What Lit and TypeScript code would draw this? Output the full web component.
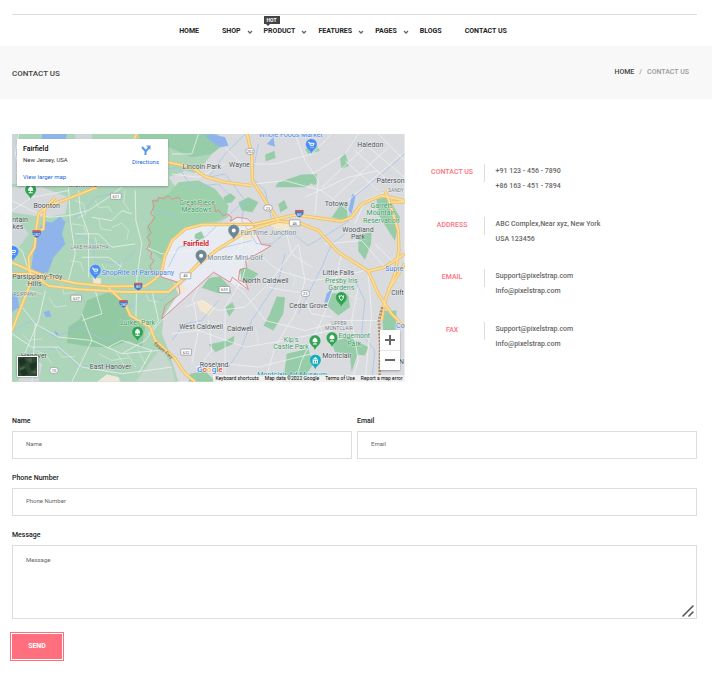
import { LitElement, html, svg, css } from "lit";
import { customElement } from "lit/decorators.js";

interface NavItem { label: string; menu?: boolean; hot?: boolean; }

const NAV: NavItem[] = [
  { label: "Home" },
  { label: "Shop", menu: true },
  { label: "Product", menu: true, hot: true },
  { label: "Features", menu: true },
  { label: "Pages", menu: true },
  { label: "Blogs" },
  { label: "Contact us" },
];

const CONTACTS = [
  { title: "Contact us", lines: ["+91 123 - 456 - 7890", "+86 163 - 451 - 7894"] },
  { title: "Address", lines: ["ABC Complex,Near xyz, New York", "USA 123456"] },
  { title: "Email", lines: ["Support@pixelstrap.com", "Info@pixelstrap.com"] },
  { title: "Fax", lines: ["Support@pixelstrap.com", "Info@pixelstrap.com"] },
];

/* Map geometry: three units to one layout pixel, 1179 x 744 in all. */
const PARKS = [
  "M400 60L470 40L540 70L600 60L625 40L600 0H380Z",
  "M800 145L870 122L915 120L915 140L880 160L790 160Z",
  "M760 62L788 50L792 72L762 82Z",
  "M985 75L1000 55L1012 95L990 104Z",
  "M680 205L710 190L740 205L722 235L690 230Z",
  "M635 190L655 178L672 190L660 206L640 208Z",
  "M800 210L818 198L828 222L806 236Z",
  "M960 250L985 215L1005 218L1010 262Z",
  "M1040 302L1080 296L1078 330L1060 378L1040 352Z",
  "M1095 195L1130 190L1165 250L1150 320L1130 290L1100 240Z",
  "M550 300L568 292L578 310L560 320L548 312Z",
  "M592 432L625 428L650 455L660 480L620 478L570 462Z",
  "M684 405L705 402L740 420L712 448L690 440Z",
  "M772 545L795 488L820 490L815 540L785 590L755 575Z",
  "M640 520L662 505L670 525L652 548Z",
  "M590 632L640 622L668 606L665 630L612 655Z",
  "M620 330L632 318L645 326L636 340Z",
  "M945 515L960 478L1010 480L1015 520L980 545Z",
  "M825 660L890 645L905 690L870 744H815Z",
  "M1110 532L1155 530L1152 590L1115 590Z",
  "M890 130L912 122L915 150L905 154Z",
  "M535 720L580 712L612 744H530Z",
  "M1015 670L1030 640L1040 655L1020 715Z",
  "M880 45L915 34L925 50L890 60Z",
  "M960 625L1010 610L1070 640L1060 665L970 655Z",
];

const WATER = [
  "M95 262L120 266L145 248L160 264L150 300L160 330L125 370L108 415L80 420L58 402L68 330L80 290Z",
  "M580 5L600 0L640 10L650 35L625 40L605 28Z",
  "M765 30L785 10L790 38Z",
  "M945 480L965 460L950 505L938 506Z",
  "M0 478L15 480L22 520L0 534Z",
  "M85 58L90 0H165L162 14L110 20Z",
  "M128 590L140 600L132 608Z",
  "M95 535L112 530L118 548L102 550Z",
  "M1010 230L1022 180L1032 185L1020 240Z",
];

const CREEKS = [
  "M700 0L640 60L590 130L640 120L700 200L690 260L735 330L780 330L830 290L890 335L950 300L1010 262L1025 190L1100 130L1179 60",
  "M0 590L60 560L130 610L200 580L280 620L330 600",
  "M160 264L210 240L250 190L300 180",
  "M300 470L360 520L400 480L450 500L520 440L560 380L640 340L720 320",
  "M470 400L500 340L560 330L620 270L700 200",
  "M820 360L800 440L760 500L720 560L690 640L650 700",
  "M860 540L900 460L930 400L960 330L1000 300",
  "M20 680L80 640L150 650L200 700L290 690L340 740",
  "M400 60L440 110L500 100L540 160L620 150L650 180",
  "M740 30L720 130L760 170L780 260",
  "M480 620L520 570L570 560L620 500",
  "M1030 440L1060 500L1050 600L1090 650L1080 744",
  "M430 230L480 240L520 290L470 320",
  "M180 300L240 320L250 380L330 390L370 350",
];

const STREETS = [
  "M0 200L60 230L110 250L170 245L230 230L290 190L330 160",
  "M170 160L175 260L190 360L170 440", "M200 170L205 230L230 300L230 430",
  "M370 170L372 260L390 330L375 430L372 560", "M240 250L300 260L330 230L360 240",
  "M190 300L260 300L300 340L370 330", "M210 370L290 370L330 400",
  "M0 330L30 350L60 440L30 520L70 570L140 610L240 620L330 660L440 650",
  "M0 600L60 640L140 640L210 700L330 720L480 700",
  "M70 570L60 744", "M210 540L240 620L180 744", "M330 660L400 620L440 570L470 540",
  "M290 640L330 620L420 650L380 720", "M100 470L80 560L30 680",
  "M250 470L270 540L210 560", "M420 470L440 560L410 600", "M0 230L60 190L170 170",
  "M404 340L450 360L540 350L620 280L680 290", "M520 520L570 500L620 530L700 520L770 450L860 330",
  "M545 500L560 590L540 690", "M700 330L740 360L800 410L900 440L980 430L1060 410",
  "M640 430L700 480L760 560L880 590L1000 560L1100 560", "M860 330L880 440L850 540L790 640L760 744",
  "M990 360L970 450L930 560L870 680L850 744", "M710 370L690 440L640 520L640 744",
  "M480 600L560 590L700 640L820 620L960 590", "M550 700L640 690L740 700L900 660",
  "M730 150L820 140L930 170L1010 230", "M640 40L690 90L790 90L900 60L960 0",
  "M850 0L880 80L920 140L910 240", "M1000 80L1100 170", "M1030 50L1140 150",
  "M1060 30L1179 130", "M1100 0L1179 80", "M930 160L1080 20", "M970 190L1130 40",
  "M1010 200L1170 60", "M900 120L1000 60L1040 0", "M880 190L1010 130L1100 110",
  "M880 500L900 540L960 550", "M1040 460L1020 560L1040 680L1020 744",
  "M1070 420L1080 540L1060 744", "M770 460L820 470L900 480", "M590 560L600 650L560 700",
  "M20 0L10 60L40 160", "M480 120L560 130L640 90", "M560 0L540 60L480 60",
  "M820 280L840 360L900 400", "M940 330L1050 320L1120 400", "M1030 270L1060 200L1130 170",
  "M1090 330L1140 380L1179 360", "M680 260L690 330L650 400", "M500 420L560 460L540 500",
];

/* Narrow residential lanes of the western suburbs. */
const LANES = [
  "M190 200L215 210L222 240L198 252", "M250 200L262 222L290 218L300 235", "M300 280L330 268L350 290L345 318",
  "M250 310L255 335L285 345", "M175 380L205 385L215 412", "M270 390L280 410L320 412L330 385",
  "M340 170L335 205L352 230", "M180 270L215 275L222 298", "M260 255L268 285L300 290",
  "M40 450L52 470L90 480", "M110 490L130 520L165 515", "M130 640L150 670L190 668", "M70 650L100 662L120 690",
  "M260 660L300 680L350 672", "M310 650L340 700", "M345 660L372 700", "M380 650L400 690",
  "M400 470L410 500L440 505", "M30 600L50 620L90 615", "M150 450L155 480L185 476",
  "M600 560L640 575L660 600", "M700 580L735 590L740 630", "M900 560L930 585L925 620",
  "M1000 480L1050 500", "M1080 450L1095 480", "M830 410L850 430L845 460",
];

const HIGHWAYS = [
  "M0 386L50 408L110 430L190 448L290 458L400 456L430 436L450 410L458 370L480 320L520 285L570 272L730 271L850 243L990 262L1020 250L1050 210L1110 185L1179 200",
  "M0 420L60 420L110 456L200 466L330 474L470 474L510 440L560 390L620 345L700 295L740 280L800 262L860 266L920 290L980 355L1070 412L1100 480L1140 540L1179 580",
  "M255 160L180 190L110 215L80 238L72 290L68 340L50 370L52 410L62 430L0 590",
  "M130 190L98 225L94 286L78 290",
  "M290 462L340 510L355 545L415 580L430 620L490 675L520 720L550 744",
  "M374 0L350 50", "M468 85L540 100L580 128L640 145L720 155",
  "M706 0L720 60L722 140L760 200L800 260",
  "M1120 170L1132 200L1160 290L1162 350L1150 420L1120 500L1110 560",
  "M1070 412L1120 400L1179 360", "M1130 470L1179 390", "M1140 205L1179 204",
];

const BORDER = "M450 555L605 415L655 445L662 430L710 468L703 448L680 438L684 408L705 402L702 380L778 336L750 332L733 300L724 270L706 254L676 250L656 262L660 250L645 240L635 246L620 228L612 234L606 206L585 214L545 210L535 218L515 205L500 190L480 196L470 186L455 195L440 190L438 202L422 200L426 218L416 240L428 250L420 264L408 278L418 296L406 310L416 328L404 345L420 356L416 372L426 380L414 398L420 412L450 430L498 445L505 480L460 515Z";

interface MapLabel { x: number; y: number; text: string; kind: string; }

const LABELS: MapLabel[] = [
  { x: 570, y: 104, text: "Lincoln Park", kind: "town" },
  { x: 683, y: 98, text: "Wayne", kind: "town" },
  { x: 1076, y: 38, text: "Haledon", kind: "town" },
  { x: 1137, y: 147, text: "Paterson", kind: "town" },
  { x: 974, y: 215, text: "Totowa", kind: "town" },
  { x: 1039, y: 293, text: "Woodland", kind: "town" },
  { x: 1039, y: 314, text: "Park", kind: "town" },
  { x: 104, y: 221, text: "Boonton", kind: "town" },
  { x: 24, y: 264, text: "ntain", kind: "town" },
  { x: 18, y: 285, text: "kes", kind: "town" },
  { x: 76, y: 435, text: "Parsippany-Troy", kind: "town" },
  { x: 68, y: 457, text: "Hills", kind: "town" },
  { x: 980, y: 423, text: "Little Falls", kind: "town" },
  { x: 762, y: 447, text: "North Caldwell", kind: "town" },
  { x: 890, y: 524, text: "Cedar Grove", kind: "town" },
  { x: 568, y: 585, text: "West Caldwell", kind: "town" },
  { x: 685, y: 592, text: "Caldwell", kind: "town" },
  { x: 976, y: 672, text: "Montclair", kind: "town" },
  { x: 296, y: 706, text: "East Hanover", kind: "town" },
  { x: 66, y: 674, text: "Hanover", kind: "town" },
  { x: 607, y: 701, text: "Roseland", kind: "town" },
  { x: 1158, y: 484, text: "Clift", kind: "town" },
  { x: 1170, y: 692, text: "N", kind: "town" },
  { x: 213, y: 160, text: "Montville", kind: "town" },
  { x: 553, y: 337, text: "Fairfield", kind: "city" },
  { x: 556, y: 213, text: "Great Piece", kind: "park" },
  { x: 554, y: 235, text: "Meadows", kind: "park" },
  { x: 1109, y: 222, text: "Garrett", kind: "park" },
  { x: 1109, y: 244, text: "Mountain", kind: "park" },
  { x: 1109, y: 266, text: "Reservation", kind: "park" },
  { x: 989, y: 448, text: "Presby Iris", kind: "park" },
  { x: 989, y: 470, text: "Gardens", kind: "park" },
  { x: 377, y: 574, text: "Lurker Park", kind: "park" },
  { x: 838, y: 625, text: "Kip's", kind: "park" },
  { x: 838, y: 647, text: "Castle Park", kind: "park" },
  { x: 1028, y: 614, text: "Edgemont", kind: "park" },
  { x: 1028, y: 636, text: "Park", kind: "park" },
  { x: 378, y: 425, text: "ShopRite of Parsippany", kind: "shop" },
  { x: 837, y: 10, text: "Whole Foods Market", kind: "shop" },
  { x: 1148, y: 413, text: "Supre", kind: "shop" },
  { x: 1166, y: 584, text: "Co", kind: "shop" },
  { x: 770, y: 304, text: "FunTime Junction", kind: "place" },
  { x: 670, y: 379, text: "Monster Mini Golf", kind: "place" },
  { x: 841, y: 730, text: "Montclair Art Museum", kind: "museum" },
  { x: 233, y: 345, text: "LAKE HIAWATHA", kind: "area" },
  { x: 982, y: 575, text: "UPPER", kind: "area" },
  { x: 982, y: 590, text: "MONTCLAIR", kind: "area" },
  { x: 39, y: 488, text: "RSIPPANY", kind: "area" },
  { x: 1153, y: 175, text: "SANDY", kind: "area" },
];

const PINS = [
  { x: 666, y: 318, color: "#6f8794", icon: "dot" },
  { x: 568, y: 394, color: "#6f8794", icon: "dot" },
  { x: 899, y: 60, color: "#4b8df8", icon: "cart" },
  { x: 250, y: 438, color: "#4b8df8", icon: "cart" },
  { x: 3, y: 382, color: "#4b8df8", icon: "cart" },
  { x: 56, y: 196, color: "#31a453", icon: "tree" },
  { x: 377, y: 624, color: "#31a453", icon: "tree" },
  { x: 910, y: 650, color: "#31a453", icon: "tree" },
  { x: 961, y: 641, color: "#31a453", icon: "tree" },
  { x: 989, y: 520, color: "#31a453", icon: "flower" },
  { x: 911, y: 708, color: "#12aec0", icon: "museum" },
];

const SHIELDS = [
  { x: 312, y: 187, text: "621" }, { x: 193, y: 493, text: "637" },
  { x: 521, y: 426, text: "46" }, { x: 849, y: 267, text: "46" },
  { x: 638, y: 467, text: "633" }, { x: 523, y: 655, text: "632" },
  { x: 715, y: 52, text: "202", round: true }, { x: 769, y: 222, text: "23", round: true },
  { x: 881, y: 479, text: "23", round: true }, { x: 126, y: 710, text: "10", round: true },
];

const INTERSTATES = [
  { x: 379, y: 458, text: "80" }, { x: 335, y: 510, text: "280" },
  { x: 863, y: 239, text: "80" }, { x: 74, y: 300, text: "287" },
];

const GLYPHS: Record<string, unknown> = {
  dot: svg`<circle cy="-28" r="6" fill="#fff"/>`,
  cart: svg`<path d="M-9 -35H-6L-3 -26H6L8 -32H-4M-1 -20h.1M5 -20h.1" fill="none" stroke="#fff" stroke-width="3" stroke-linecap="round" stroke-linejoin="round"/>`,
  tree: svg`<path d="M0 -39C7 -36 8 -30 7 -25H1V-21H6V-18H-6V-21H-1V-25H-7C-8 -30 -7 -36 0 -39Z" fill="#fff"/>`,
  flower: svg`<path d="M-7 -34L-3 -32L0 -36L3 -32L7 -34L5 -26L0 -20L-5 -26Z" fill="none" stroke="#fff" stroke-width="3"/>`,
  museum: svg`<path d="M-9 -31L0 -38L9 -31ZM-8 -29H8V-19H-8ZM-4 -27V-21H-1V-27ZM2 -27V-21H5V-27Z" fill="#fff" fill-rule="evenodd"/>`,
};

@customElement("area-map")
class AreaMap extends LitElement {
  static styles = css`
    :host { display: block; position: relative; font-family: Roboto, sans-serif; overflow: hidden; }
    .canvas { display: block; width: 100%; height: auto; }
    .canvas text { text-anchor: middle; font-size: 21px; paint-order: stroke; stroke: #fff; stroke-opacity: 0.6; stroke-width: 3px; stroke-linejoin: round; }
    .canvas .town { fill: #4a4d51; }
    .canvas .city { fill: #d2232a; font-weight: 700; }
    .canvas .park { fill: #3b9c62; }
    .canvas .shop { fill: #3c80ea; }
    .canvas .place { fill: #718895; }
    .canvas .museum { fill: #12929f; }
    .canvas .area { fill: #74797e; font-size: 15px; }
    .canvas .road { fill: #7d6137; stroke: none; font-size: 15px; }
    .canvas .num { font-size: 12px; fill: #555; stroke: none; }
    .canvas .inum { font-size: 12px; fill: #fff; stroke: none; }
    .canvas .logo { font-size: 24px; font-weight: 500; stroke-opacity: 1; text-anchor: start; }
    .card { position: absolute; left: 5px; top: 5px; width: 151px; height: 47px; box-sizing: border-box; padding: 5px 6px; background: #fff; box-shadow: 0 1px 2px rgb(0 0 0 / 25%); display: flex; justify-content: space-between; font-size: 6px; line-height: 8px; color: #333; }
    .info { display: flex; flex-direction: column; }
    .info strong { font-size: 7px; line-height: 10px; font-weight: 500; color: #000; }
    .info span { line-height: 12px; }
    .info a { margin-top: auto; }
    .card a { color: #1a67e0; text-decoration: none; }
    .directions { display: flex; flex-direction: column; align-items: center; align-self: flex-start; padding: 1px 3px 0 0; gap: 3px; }
    .directions svg { width: 10px; height: 10px; }
    .zoom { position: absolute; right: 5px; bottom: 12px; width: 20px; display: flex; flex-direction: column; background: #fff; box-shadow: 0 1px 2px rgb(0 0 0 / 30%); }
    .zoom button { height: 20px; padding: 0; border: 0; background: none; display: grid; place-items: center; }
    .zoom button + button { border-top: 1px solid #e6e6e6; }
    .zoom svg { width: 10px; height: 10px; }
    .layer { position: absolute; left: 5px; bottom: 5px; width: 21px; height: 21px; padding: 0; border: 1px solid #fff; background: #2e4732; box-shadow: 0 0 2px rgb(0 0 0 / 40%); }
    .layer svg { display: block; width: 100%; height: 100%; }
    .legal { position: absolute; right: 0; bottom: 0; display: flex; gap: 6px; padding: 0 2px; background: rgb(245 245 245 / 85%); font-size: 5px; line-height: 7px; white-space: nowrap; color: #000; }
    .legal a, .legal button { font: inherit; color: inherit; text-decoration: none; padding: 0; border: 0; background: none; }
  `;

  render() {
    return html`
      <svg class="canvas" viewBox="0 0 1179 744" role="img" aria-label="Map of Fairfield, New Jersey">
        <rect width="1179" height="744" fill="#d9dbdf"/>
        <path d="M0 0H620L600 60L560 110L500 140L470 190L620 200L650 250L500 320L440 420L498 445L500 480L455 555L450 600L470 650L500 744H0Z" fill="#add5b9"/>
        <path d="M0 160H90L170 190L160 240L100 250L60 245L0 235Z" fill="#d5d9dc"/>
        <path d="M0 0H16V150H0ZM0 250L30 270L50 300L20 340L0 330ZM190 0H240V16H190Z" fill="#cfd6d9"/>
        <path d="M470 130L520 110L560 120L590 180L500 170Z" fill="#d9dbdf"/>
        <path d="M30 660L90 690L80 744H20Z" fill="#d5d9dc"/>
        <path d="M255 744L285 722L320 730L325 744Z" fill="#efe9dc"/>
        <path d="M370 744L450 640L480 700L490 744Z" fill="#c6d8cd"/>
        <path d="M420 200L470 180L500 145L560 140L610 165L650 215L645 245L620 260L570 268L510 285L470 330L450 380L410 340L405 280L425 250Z" fill="#9cd1ac"/>
        <path d="M225 500L290 475L330 500L350 540L400 580L390 640L350 620L300 640L240 640L165 628L170 580L205 555Z" fill="#92c8a2"/>
        ${PARKS.map((d) => svg`<path d=${d} fill="#97cca8"/>`)}
        <path d="M450 555L500 480L498 445L450 430L460 370L480 320L520 285L570 270L650 268L676 250H706L724 270L733 300L750 332L778 336L702 380L684 438L703 448L710 468L655 445L605 415Z" fill="#e9ebf2"/>
        <path d="M550 300L568 292L578 310L560 320L548 312ZM684 405L705 402L714 440L690 440Z" fill="#97cca8"/>
        <path d="M485 450L510 445L525 470L500 480ZM555 505L575 500L610 525L590 545L565 530ZM690 290L730 280L730 310L695 320ZM242 432L268 434L266 452L245 452ZM770 265L830 258L835 290L790 285Z" fill="#f3e8cd"/>
        ${CREEKS.map((d) => svg`<path d=${d} fill="none" stroke="#9dbff0" stroke-width="2.5" stroke-linejoin="round" opacity=".8"/>`)}
        ${WATER.map((d) => svg`<path d=${d} fill="#8fb4ec"/>`)}
        ${LANES.map((d) => svg`<path d=${d} fill="none" stroke="#e6efe9" stroke-width="2" stroke-linejoin="round" opacity=".8"/>`)}
        ${STREETS.map((d) => svg`<path d=${d} fill="none" stroke="#f0f3f4" stroke-width="3" stroke-linejoin="round" opacity=".75"/>`)}
        <path d=${BORDER} fill="none" stroke="#df8d8d" stroke-width="3" stroke-linejoin="round"/>
        ${HIGHWAYS.map((d) => svg`<path d=${d} fill="none" stroke="#efbf67" stroke-width="10" stroke-linejoin="round"/>`)}
        ${HIGHWAYS.map((d) => svg`<path d=${d} fill="none" stroke="#fbdf96" stroke-width="5" stroke-linejoin="round"/>`)}
        <path d="M1112 520L1102 560L1106 640L1104 725" fill="none" stroke="#b58d62" stroke-width="8" stroke-dasharray="6 4"/>
        <path id="parkway" d="M424 630L480 678" fill="none"/>
        <text class="road"><textPath href="#parkway" startOffset="50%">Essex Fwy</textPath></text>
        ${SHIELDS.map((s) => svg`
          <rect x=${s.x - (s.round ? 13 : 16)} y=${s.y - 9} width=${s.round ? 26 : 32} height="18" rx=${s.round ? 9 : 2} fill="#fff" stroke="#8a8d90" stroke-width="2"/>
          <text class="num" x=${s.x} y=${s.y + 5}>${s.text}</text>`)}
        ${INTERSTATES.map((s) => svg`
          <path d="M${s.x - 12} ${s.y - 10}H${s.x + 12}Q${s.x + 16} ${s.y + 5} ${s.x} ${s.y + 12}Q${s.x - 16} ${s.y + 5} ${s.x - 12} ${s.y - 10}Z" fill="#4477c4"/>
          <path d="M${s.x - 12} ${s.y - 11}H${s.x + 12}V${s.y - 6}H${s.x - 12}Z" fill="#d45b56"/>
          <text class="inum" x=${s.x} y=${s.y + 6}>${s.text}</text>`)}
        ${LABELS.map((l) => svg`<text class=${l.kind} x=${l.x} y=${l.y}>${l.text}</text>`)}
        ${PINS.map((p) => svg`
          <g transform="translate(${p.x} ${p.y})">
            <path d="M0 0C-3 -12 -17 -16 -17 -29A17 17 0 0 1 17 -29C17 -16 3 -12 0 0Z" fill=${p.color} stroke="#fff" stroke-opacity=".5"/>
            ${GLYPHS[p.icon]}
          </g>`)}
        <text class="logo" x="556" y="714"><tspan fill="#4285f4">G</tspan><tspan fill="#ea4335">o</tspan><tspan fill="#fbbc05">o</tspan><tspan fill="#4285f4">g</tspan><tspan fill="#34a853">l</tspan><tspan fill="#ea4335">e</tspan></text>
      </svg>
      <div class="card">
        <div class="info">
          <strong>Fairfield</strong>
          <span>New Jersey, USA</span>
          <a href="#larger">View larger map</a>
        </div>
        <a class="directions" href="#directions">
          <svg viewBox="0 0 20 20" aria-hidden="true"><path d="M9 20V12L2 4M9 13L16 5" fill="none" stroke="#5a9be8" stroke-width="4"/><path d="M10 1H19V10Z" fill="#5a9be8"/></svg>
          Directions
        </a>
      </div>
      <button class="layer" aria-label="Show satellite imagery">
        <svg viewBox="0 0 20 20" aria-hidden="true"><path d="M0 3L6 1L9 6L3 10ZM12 8L19 5V11L14 14ZM2 15L8 12L11 18L5 20Z" fill="#1d3323"/><path d="M8 2L15 1L14 6ZM1 12L6 10L8 11L3 14ZM13 16L19 14V18Z" fill="#4b6049"/></svg>
      </button>
      <div class="zoom">
        <button aria-label="Zoom in"><svg viewBox="0 0 10 10" aria-hidden="true"><path d="M5 0V10M0 5H10" stroke="#666" stroke-width="2"/></svg></button>
        <button aria-label="Zoom out"><svg viewBox="0 0 10 10" aria-hidden="true"><path d="M0 5H10" stroke="#666" stroke-width="2"/></svg></button>
      </div>
      <div class="legal">
        <button>Keyboard shortcuts</button><span>Map data ©2022 Google</span><a href="#terms">Terms of Use</a><a href="#report">Report a map error</a>
      </div>
    `;
  }
}

@customElement("app-root")
class AppRoot extends LitElement {
  static styles = css`
    :host { display: block; background: #fff; font-family: Roboto, sans-serif; font-size: 7px; line-height: 15px; color: #222; padding-top: 14px; }
    a { color: inherit; text-decoration: none; }
    .header { margin: 0 15px 0 12px; border-top: 1px solid #ddd; }
    .nav { box-sizing: border-box; display: flex; justify-content: center; height: 31px; align-items: center; padding: 2px 23px 0 0; }
    .nav ul { display: flex; list-style: none; margin: 0; padding: 0; }
    .item { position: relative; display: flex; align-items: center; gap: 6px; padding-right: 23px; font-weight: 700; text-transform: uppercase; }
    .item:last-child { padding-right: 0; }
    .item.menu { padding-right: 11px; }
    .chevron { width: 6px; height: 6px; }
    .hot { position: absolute; left: 0; top: -8px; width: 16px; height: 8px; background: #444; color: #fff; font-size: 5px; line-height: 8px; text-align: center; }
    .hot::after { content: ""; position: absolute; left: 2px; top: 8px; border: 2px solid transparent; border-top-color: #444; }
    .banner { box-sizing: border-box; background: #f8f8f8; height: 53px; padding: 2px 23px 0 12px; display: flex; justify-content: space-between; align-items: center; text-transform: uppercase; }
    .banner h1 { margin: 0; font-size: 8px; font-weight: 500; color: #444; }
    .crumbs { display: flex; gap: 5px; margin: 0; padding: 0 0 3px; list-style: none; font-weight: 500; color: #999; }
    .crumbs a { color: #444; }
    .content { padding: 35px 15px 30px 12px; }
    .top { display: grid; grid-template-columns: 7fr 5fr; column-gap: 12px; }
    .contacts { margin: 0; padding: 30px 0; display: flex; flex-direction: column; justify-content: space-between; }
    .contact { display: flex; align-items: flex-start; height: 30px; }
    .contact h2 { box-sizing: border-box; width: 68px; height: 18px; margin: 0; padding-left: 4px; border-right: 1px solid #ddd; font-size: 7px; line-height: 16px; font-weight: 500; text-align: center; text-transform: uppercase; color: #ff6f7d; }
    .contact p { margin: 0; padding-left: 11px; font-weight: 500; color: #666; }
    .contact span { display: block; }
    form { display: grid; grid-template-columns: 1fr 1fr; gap: 14px 5px; margin-top: 34px; }
    .field { display: flex; flex-direction: column; }
    .wide { grid-column: 1 / -1; }
    label { font-weight: 500; line-height: 10px; padding-bottom: 5px; }
    input, textarea { display: block; box-sizing: border-box; width: 100%; height: 28px; margin: 0; padding: 0 13px 2px; border: 1px solid #ddd; border-radius: 0; background: #fff; color: #333; font: 6px/10px Roboto, sans-serif; }
    textarea { height: 74px; padding-top: 9px; resize: none; }
    ::placeholder { color: #666; opacity: 1; }
    .box { position: relative; }
    .grip { position: absolute; right: 3px; bottom: 2px; width: 12px; height: 12px; }
    .send { justify-self: start; width: 50px; height: 25px; margin-top: 1px; padding: 0; border: 0; background: #ff6f7d; outline: 1px solid #ff6f7d; outline-offset: 1px; color: #fff; font: 700 7px/10px Roboto, sans-serif; text-transform: uppercase; }
  `;

  render() {
    return html`
      <header class="header">
        <nav class="nav">
          <ul>
            ${NAV.map((n) => html`
              <li class="item ${n.menu ? "menu" : ""}">
                <a href="#">${n.label}</a>
                ${n.menu ? html`<svg class="chevron" viewBox="0 0 6 6" aria-hidden="true"><path d="M1 2L3 4L5 2" fill="none" stroke="#666" stroke-width="1.3"/></svg>` : ""}
                ${n.hot ? html`<span class="hot">Hot</span>` : ""}
              </li>`)}
          </ul>
        </nav>
      </header>
      <section class="banner">
        <h1>Contact us</h1>
        <ol class="crumbs"><li><a href="#">Home</a></li><li>/</li><li>Contact us</li></ol>
      </section>
      <main class="content">
        <div class="top">
          <area-map></area-map>
          <div class="contacts">
            ${CONTACTS.map((c) => html`
              <div class="contact">
                <h2>${c.title}</h2>
                <p>${c.lines.map((l) => html`<span>${l}</span>`)}</p>
              </div>`)}
          </div>
        </div>
        <form>
          <div class="field"><label for="name">Name</label><input id="name" type="text" placeholder="Name"></div>
          <div class="field"><label for="email">Email</label><input id="email" type="email" placeholder="Email"></div>
          <div class="field wide"><label for="phone">Phone Number</label><input id="phone" type="tel" placeholder="Phone Number"></div>
          <div class="field wide">
            <label for="message">Message</label>
            <div class="box">
              <textarea id="message" placeholder="Message"></textarea>
              <svg class="grip" viewBox="0 0 12 12" aria-hidden="true"><path d="M1 11L11 1M7 11L11 7" stroke="#555" stroke-width="1.6" stroke-linecap="round"/></svg>
            </div>
          </div>
          <button class="send" type="button">Send</button>
        </form>
      </main>
    `;
  }
}
